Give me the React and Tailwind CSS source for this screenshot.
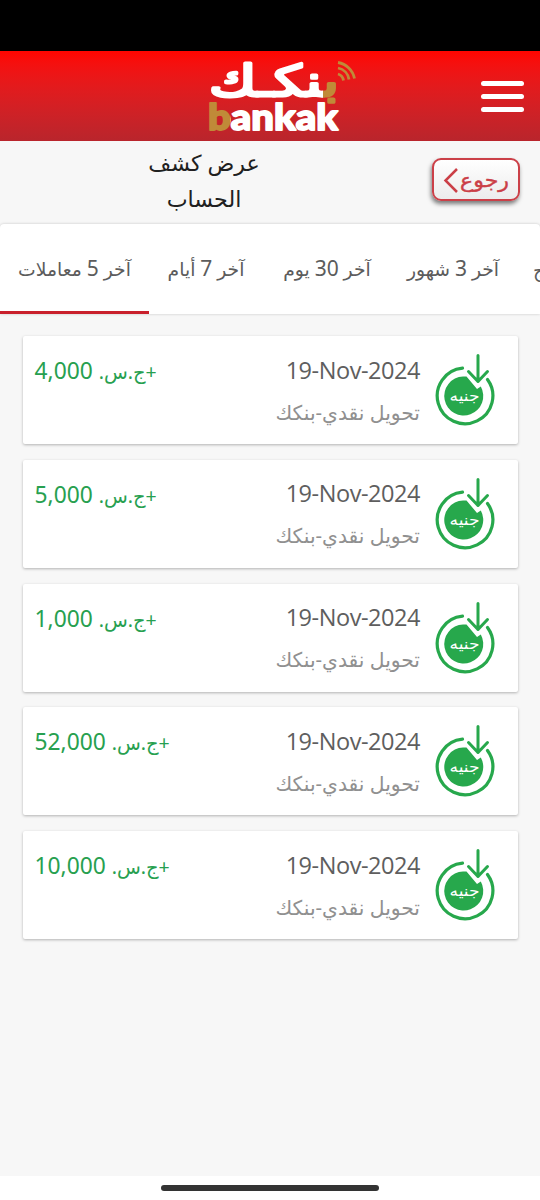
const tabs = [
  { label: 'آخر', count: '5', unit: 'معاملات', width: 'w-[149px]' },
  { label: 'آخر', count: '7', unit: 'أيام', width: 'w-[114px]' },
  { label: 'آخر', count: '30', unit: 'يوم', width: 'w-[128px]' },
  { label: 'آخر', count: '3', unit: 'شهور', width: 'w-[124px]' },
]

const transactions = [
  { id: 1, amount: '4,000' },
  { id: 2, amount: '5,000' },
  { id: 3, amount: '1,000' },
  { id: 4, amount: '52,000' },
  { id: 5, amount: '10,000' },
]

function Logo() {
  return (
    <svg width="154" height="84" viewBox="0 0 154 84" className="ml-[204px]" aria-label="bankak">
      <defs>
        <linearGradient id="arabic" gradientUnits="userSpaceOnUse" x1="0" y1="0" x2="154" y2="0">
          <stop offset="0.77" stopColor="#fff" />
          <stop offset="0.77" stopColor="#c08a38" />
        </linearGradient>
        <linearGradient id="latin" gradientUnits="userSpaceOnUse" x1="0" y1="0" x2="154" y2="0">
          <stop offset="0.169" stopColor="#c08a38" />
          <stop offset="0.169" stopColor="#fff" />
        </linearGradient>
      </defs>
      <text
        x="5"
        y="42"
        textLength="130"
        lengthAdjust="spacingAndGlyphs"
        fill="url(#arabic)"
        stroke="url(#arabic)"
        strokeWidth="3"
        strokeLinecap="round"
        strokeLinejoin="round"
        fontFamily="'DejaVu Sans', sans-serif"
        fontSize="43"
      >
        بنكـك
      </text>
      <text
        x="4"
        y="76"
        textLength="130"
        lengthAdjust="spacingAndGlyphs"
        fill="url(#latin)"
        stroke="url(#latin)"
        strokeWidth="1.8"
        strokeLinejoin="round"
        fontFamily="Lato, sans-serif"
        fontWeight="900"
        fontSize="36.5"
      >
        bankak
      </text>
      <g fill="none" stroke="#c08a38" strokeWidth="2.8">
        <path d="M134 20a8 8 0 0 1 5.500 6.500" />
        <path d="M134 14a14 14 0 0 1 11 11.500" />
        <path d="M134 8.500a20 20 0 0 1 16.500 16" />
      </g>
    </svg>
  )
}

function Header() {
  return (
    <header className="flex h-[90px] items-center bg-linear-to-b from-[#ff0500] to-[#b9252c]">
      <Logo />
      <button className="ml-auto mr-4 flex flex-col gap-[8px]" aria-label="menu">
        <span className="h-[5px] w-[43px] rounded-full bg-white" />
        <span className="h-[5px] w-[43px] rounded-full bg-white" />
        <span className="h-[5px] w-[43px] rounded-full bg-white" />
      </button>
    </header>
  )
}

function BackButton() {
  return (
    <button className="mr-5 mt-[17px] flex h-[43px] w-[88px] items-center justify-center rounded-[9px] border-[2.5px] border-[#cb4048] bg-linear-to-b from-white to-[#ececec] shadow-[-1px_3px_4px_rgba(0,0,0,0.5)]">
      <svg width="80" height="36" viewBox="0 0 80 36">
        <path d="M21 7 9.500 18.500 21 30" fill="none" stroke="#cb3f47" strokeWidth="2.500" />
        <text
          x="24"
          y="25"
          textLength="49"
          lengthAdjust="spacingAndGlyphs"
          fill="#cb3f47"
          stroke="#cb3f47"
          strokeWidth="0.4"
          fontFamily="'DejaVu Sans', sans-serif"
          fontSize="20"
        >
          رجوع
        </text>
      </svg>
    </button>
  )
}

function ReceivedIcon() {
  return (
    <svg width="64" height="76" viewBox="0 0 64 76" fill="none">
      <path
        d="M30.500 15.200A27.800 27.800 0 1 0 55.500 26.500"
        stroke="#27a84c"
        strokeWidth="3.200"
        strokeLinecap="round"
      />
      <path
        d="M31 23.500H34.500L45 36L48.800 33.500A19.500 19.500 0 1 1 31 23.500Z"
        fill="#27a84c"
      />
      <path
        d="M46 2.500V28.500M36.500 18.500 46 28.500 55.500 18.500"
        stroke="#27a84c"
        strokeWidth="3"
        strokeLinecap="round"
        strokeLinejoin="round"
      />
      <text
        x="17.500"
        y="48"
        textLength="30"
        lengthAdjust="spacingAndGlyphs"
        fill="#fff"
        fontFamily="'DejaVu Sans', sans-serif"
        fontSize="15"
      >
        جنيه
      </text>
    </svg>
  )
}

function TransactionCard({ amount }) {
  return (
    <li className="flex h-[108px] rounded-[2px] bg-white shadow-[0_1px_3px_rgba(0,0,0,0.28)]">
      <div dir="rtl" className="ml-3 mt-[19px] whitespace-nowrap text-[22.8px] leading-8 text-[#27a050]">
        <span className="text-[19.5px]">+ج.س.</span> {amount}
      </div>
      <div className="ml-auto flex flex-col items-end whitespace-nowrap">
        <div className="mt-[17.500px] font-['Open_Sans','Noto_Sans',sans-serif] text-[23.5px] leading-8 tracking-[-0.450px] text-[#5e5e5e]">
          19-Nov-2024
        </div>
        <div dir="rtl" className="mt-[10px] text-[20.3px] leading-8 text-[#909090]">
          تحويل نقدي-بنكك
        </div>
      </div>
      <div className="ml-[11.500px] mr-[22px] mt-[17px]">
        <ReceivedIcon />
      </div>
    </li>
  )
}

export default function App() {
  return (
    <div className="flex h-[1200px] w-[540px] flex-col overflow-hidden bg-[#f7f7f7] font-['Noto_Sans','DejaVu_Sans',sans-serif]">
      <div className="h-[51px] shrink-0 bg-black" />
      <Header />

      <div className="flex h-[83px] shrink-0 justify-between">
        <h1
          dir="rtl"
          className="ml-[134px] mt-[4px] w-[140px] text-center text-[22.2px] leading-[36px] text-[#202020]"
        >
          عرض كشف
          <br />
          الحساب
        </h1>
        <BackButton />
      </div>

      <nav className="flex h-[90px] shrink-0 overflow-hidden rounded-t bg-white shadow-[0_0_3px_rgba(0,0,0,0.2)]">
        {tabs.map((tab, i) => (
          <button
            key={tab.count}
            dir="rtl"
            className={`${tab.width} shrink-0 whitespace-nowrap border-b-[3px] pt-[2px] text-[18.800px] text-[#5c5c5c] ${
              i === 0 ? 'border-[#c9202c]' : 'border-transparent'
            }`}
          >
            {tab.label} <span className="text-[21px]">{tab.count}</span> {tab.unit}
          </button>
        ))}
        <button className="shrink-0 pl-[18px] pt-[2px] text-[19px] text-[#5c5c5c]">ج</button>
      </nav>

      <ul className="mx-[22.500px] mt-[22px] flex flex-col gap-[15.800px]">
        {transactions.map((t) => (
          <TransactionCard key={t.id} amount={t.amount} />
        ))}
      </ul>

      <footer className="mt-auto flex h-6 shrink-0 justify-center bg-white pt-[9px]">
        <div className="h-[6px] w-[218px] rounded-full bg-[#333]" />
      </footer>
    </div>
  )
}
